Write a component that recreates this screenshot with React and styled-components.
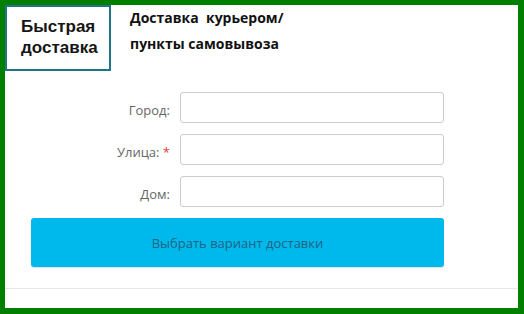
import React from 'react';
import styled, { createGlobalStyle } from 'styled-components';

const GlobalStyle = createGlobalStyle`
	html, body {
		margin: 0;
		padding: 0;
		background: #fff;
	}
`;

const Frame = styled.div`
	box-sizing: border-box;
	width: 524px;
	height: 314px;
	border: solid #007f00;
	border-width: 5px 6px 6px 5px;
	background: #fff;
	display: flex;
	flex-direction: column;
`;

const Header = styled.div`
	display: flex;
	align-items: flex-start;
	gap: 19px;
`;

const Badge = styled.div`
	box-sizing: border-box;
	width: 106px;
	height: 66px;
	border: 2px solid #1f7587;
	padding: 9px 0 0 14px;
	font-family: 'Liberation Sans', Arial, sans-serif;
	font-weight: 700;
	font-size: 17px;
	line-height: 21px;
	color: #161616;
`;

const Title = styled.div`
	font-family: 'Open Sans', sans-serif;
	font-weight: 700;
	font-size: 14px;
	line-height: 26px;
	color: #111;
	white-space: pre;
`;

const Form = styled.div`
	margin: 21px 0 0 26px;
	width: 413px;
	display: flex;
	flex-direction: column;
	gap: 11px;
`;

const Row = styled.div`
	display: grid;
	grid-template-columns: 139px 264px;
	column-gap: 10px;
	align-items: center;
`;

const Label = styled.label`
	text-align: right;
	font-family: 'Open Sans', sans-serif;
	font-size: 13px;
	color: #666;
	padding-top: 4px;
`;

const Star = styled.span`
	color: #d9443a;
`;

const Input = styled.input`
	box-sizing: border-box;
	height: 31px;
	width: 100%;
	border: 1px solid #cccccc;
	border-radius: 3px;
	background: #fff;
	margin: 0;
`;

const Button = styled.button`
	height: 49px;
	width: 100%;
	border: none;
	border-radius: 3px;
	background: #00b9ec;
	box-shadow: 0 1px 1px rgba(0, 0, 0, 0.12);
	font-family: 'Open Sans', sans-serif;
	font-size: 13px;
	color: #1f6482;
	cursor: pointer;
`;

const Divider = styled.div`
	height: 1px;
	background: #e6e6e6;
	margin-top: 21px;
`;

const fields = [
	{ label: 'Город:' },
	{ label: 'Улица:', required: true },
	{ label: 'Дом:' },
];

export default function App() {
	return (
		<>
			<GlobalStyle />
			<Frame>
				<Header>
					<Badge>
						Быстрая
						<br />
						доставка
					</Badge>
					<Title>{'Доставка  курьером/\nпункты самовывоза'}</Title>
				</Header>
				<Form>
					{fields.map(f => (
						<Row key={f.label}>
							<Label>
								{f.label}
								{f.required && <Star> *</Star>}
							</Label>
							<Input type='text' />
						</Row>
					))}
					<Button>Выбрать вариант доставки</Button>
				</Form>
				<Divider />
			</Frame>
		</>
	);
}
